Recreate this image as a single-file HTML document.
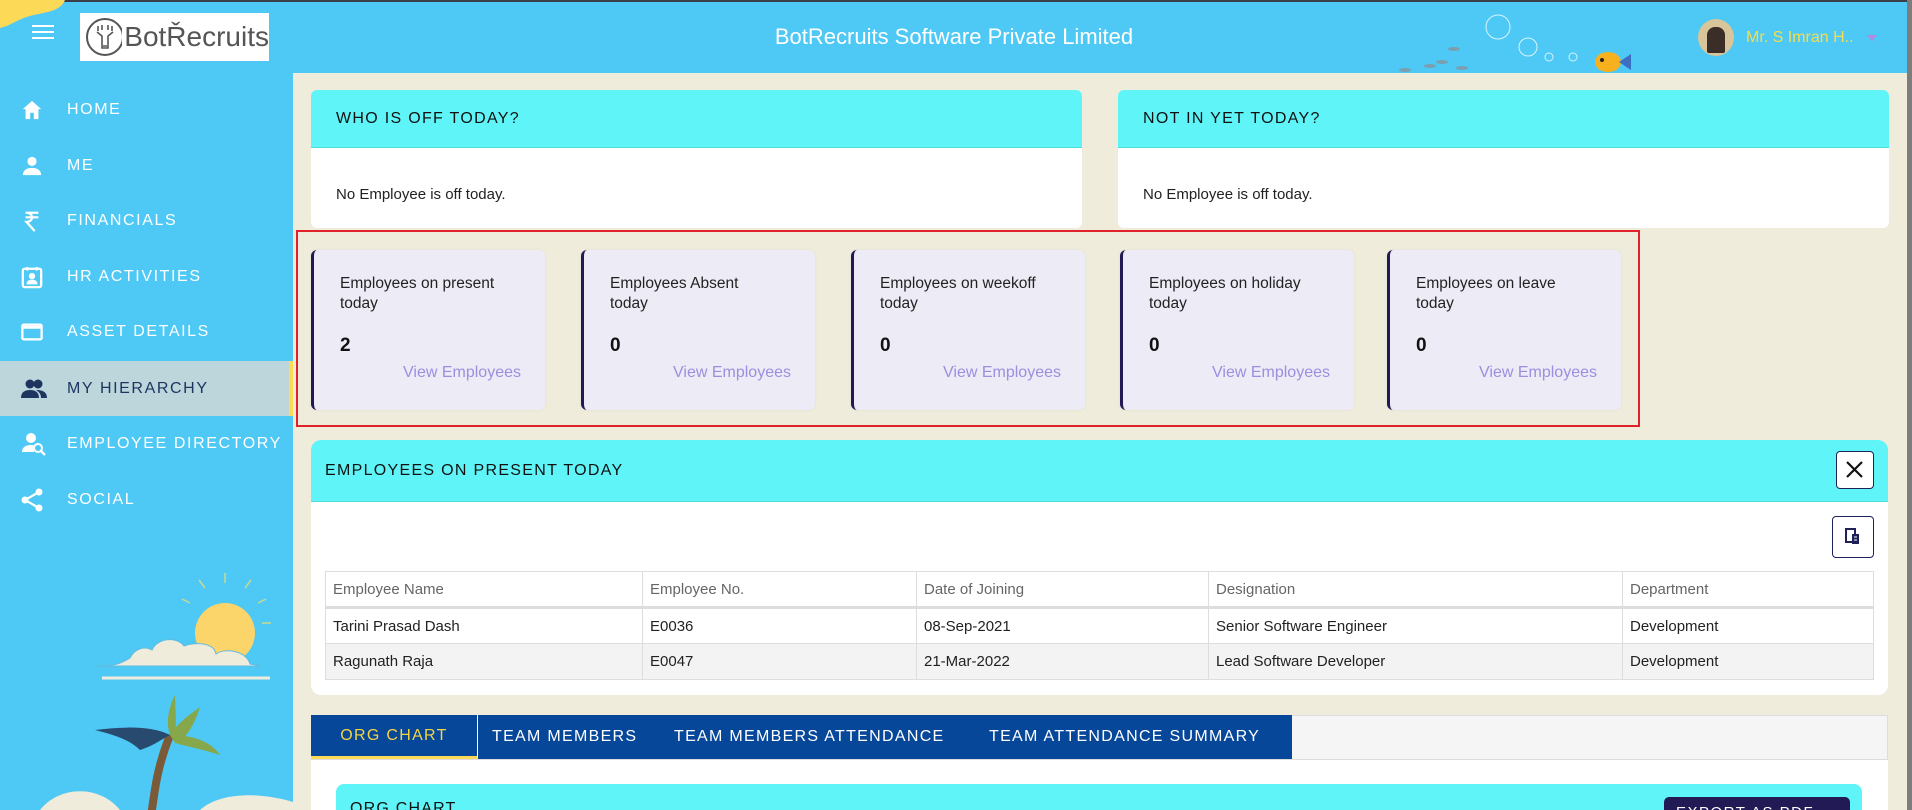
<!DOCTYPE html>
<html><head><meta charset="utf-8"><style>
*{box-sizing:border-box;margin:0;padding:0}
html,body{width:1912px;height:810px;overflow:hidden}
body{background:#efecdc;font-family:"Liberation Sans",sans-serif;position:relative;color:#222}
.abs{position:absolute}
#top{left:0;top:0;width:1908px;height:73px;background:#4ec8f4;border-top:2px solid #3a3f4a}
#side{left:0;top:73px;width:293px;height:737px;background:#4ec8f4;overflow:hidden}
.nav{position:absolute;left:0;width:289px;height:55px;color:#fff;font-size:16px;letter-spacing:1.6px;display:flex;align-items:center}
.nav svg{position:absolute;left:21px}
.nav span{position:absolute;left:67px}
.card{background:#fff;border-radius:6px;overflow:hidden}
.hdr{background:#5ff5f8;border-bottom:1px solid #4fdde0;font-size:16px;letter-spacing:1.3px;color:#111;display:flex;align-items:center;padding-left:25px}
.stat{position:absolute;top:250px;width:234px;height:160px;background:#edebf5;border-left:3px solid #221a55;border-radius:6px;box-shadow:0 0 3px rgba(0,0,0,.06)}
.stat .t{position:absolute;left:26px;top:24px;font-size:15.5px;line-height:20px;color:#222}
.stat .n{position:absolute;left:26px;top:85px;font-size:19px;font-weight:bold;color:#111}
.stat .v{position:absolute;right:24px;top:114px;font-size:16px;color:#9d8ee0}
table{border-collapse:collapse;font-size:15px;color:#222}
td{border:1px solid #ddd;padding:0 7px;height:36px}
.tab{position:absolute;top:715px;height:44px;color:#fff;font-size:16px;letter-spacing:1.3px;display:flex;align-items:center}
</style></head><body>
<div id="top" class="abs">
 <svg class="abs" style="left:0;top:-2px" width="70" height="30"><path d="M0 0H65C60 12 45 12 30 16C18 19 10 26 0 28Z" fill="#fcd957"/></svg>
 <div class="abs" style="left:32px;top:23px;width:22px;height:2px;background:#fff;box-shadow:0 6px 0 #fff,0 12px 0 #fff"></div>
 <div class="abs" style="left:80px;top:11px;width:189px;height:48px;background:#fff;display:flex;align-items:center">
  <svg width="42" height="42" style="margin-left:4px"><circle cx="21" cy="21" r="18" fill="none" stroke="#555" stroke-width="2"/><path d="M14 10v5M18 9v5M24 9v5M28 10v5M13 16l5 4 0 12 h6v-12l5-4M19 30h4" fill="none" stroke="#555" stroke-width="1.6"/></svg>
  <span style="font-size:28px;color:#555;margin-left:2px">BotŘecruits</span></div>
 <div class="abs" style="left:0;width:1908px;top:22px;text-align:center;color:#fff;font-size:22px">BotRecruits Software Private Limited</div>
 <svg class="abs" style="left:1390px;top:10px" width="260" height="60"><g fill="none" stroke="#d6f4ff" stroke-width="1"><circle cx="108" cy="15" r="12"/><circle cx="138" cy="35" r="9"/><circle cx="159" cy="45" r="4"/><circle cx="183" cy="45" r="4"/></g><g fill="#7aa0b0"><ellipse cx="15" cy="58" rx="6" ry="2"/><ellipse cx="40" cy="54" rx="6" ry="2"/><ellipse cx="52" cy="50" rx="6" ry="2"/><ellipse cx="64" cy="37" rx="6" ry="2"/><ellipse cx="72" cy="56" rx="6" ry="2"/><ellipse cx="55" cy="64" rx="6" ry="2"/></g><ellipse cx="218" cy="50" rx="13" ry="10" fill="#f7b11e"/><path d="M229 50l12-8v16z" fill="#3a6fc4"/><circle cx="212" cy="48" r="2" fill="#222"/></svg>
 <div class="abs" style="left:1698px;top:17px;width:36px;height:37px;border-radius:50%;background:#d8c59a;overflow:hidden"><div style="margin:8px 0 0 9px;width:18px;height:26px;background:#3b2e28;border-radius:8px 8px 2px 2px"></div></div>
 <div class="abs" style="left:1746px;top:27px;color:#f7dd4e;font-size:16px">Mr. S Imran H..</div>
 <svg class="abs" style="left:1867px;top:33px" width="10" height="6"><path d="M0 0h10L5 6z" fill="#b28be0"/></svg>
</div>
<div class="abs" style="left:1907px;top:0;width:5px;height:810px;background:#7d7d7d"></div>
<div id="side" class="abs">
 <div class="nav" style="top:9px"><svg width="22" height="22" viewBox="0 0 24 24"><path d="M12 2L2 11h3v11h5v-7h4v7h5V11h3z" fill="#fff"/></svg><span>HOME</span></div>
 <div class="nav" style="top:65px"><svg width="22" height="22" viewBox="0 0 24 24"><circle cx="12" cy="7" r="5" fill="#fff"/><path d="M2 22c0-6 5-8 10-8s10 2 10 8z" fill="#fff"/></svg><span>ME</span></div>
 <div class="nav" style="top:120px"><svg width="22" height="24" viewBox="0 0 24 24"><path d="M5 3h14M5 8h14M6 3c8 0 8 10 0 10l9 10" fill="none" stroke="#fff" stroke-width="2.4"/></svg><span>FINANCIALS</span></div>
 <div class="nav" style="top:176px"><svg width="22" height="24" viewBox="0 0 24 24"><rect x="2" y="3" width="20" height="20" rx="2" fill="none" stroke="#fff" stroke-width="2.5"/><circle cx="12" cy="11" r="3.5" fill="#fff"/><path d="M6 20c0-4 3-5 6-5s6 1 6 5z" fill="#fff"/><path d="M7 1v4M17 1v4" stroke="#fff" stroke-width="2"/></svg><span>HR ACTIVITIES</span></div>
 <div class="nav" style="top:231px"><svg width="22" height="20" viewBox="0 0 24 20"><rect x="1.5" y="2" width="21" height="16" rx="1.5" fill="none" stroke="#fff" stroke-width="2.5"/><path d="M2 5h20" stroke="#fff" stroke-width="3"/></svg><span>ASSET DETAILS</span></div>
 <div class="nav" style="top:288px;background:#bdd6dc;color:#1e3560;border-right:4px solid #fcd957;width:293px"><svg width="27" height="20" viewBox="0 0 27 20"><circle cx="9" cy="5" r="4.5" fill="#1e3560"/><circle cx="17" cy="5" r="4.5" fill="#1e3560"/><path d="M0 19c0-6 4-8 9-8s9 2 9 8zM15 11c5 0 11 1 11 8h-6c0-4-2-6-5-8z" fill="#1e3560"/></svg><span>MY HIERARCHY</span></div>
 <div class="nav" style="top:343px"><svg width="26" height="24" viewBox="0 0 26 24"><circle cx="10" cy="6" r="5" fill="#fff"/><path d="M1 20c0-5 4-7 9-7 1 0 2 0 3 .5v6.5z" fill="#fff"/><circle cx="17" cy="16" r="4" fill="none" stroke="#fff" stroke-width="2"/><path d="M20 19l4 4" stroke="#fff" stroke-width="2.4"/></svg><span>EMPLOYEE DIRECTORY</span></div>
 <div class="nav" style="top:399px"><svg width="22" height="24" viewBox="0 0 22 24"><circle cx="18" cy="4" r="3.5" fill="#fff"/><circle cx="4" cy="12" r="3.5" fill="#fff"/><circle cx="18" cy="20" r="3.5" fill="#fff"/><path d="M18 4L4 12l14 8" fill="none" stroke="#fff" stroke-width="2.2"/></svg><span>SOCIAL</span></div>
 <svg class="abs" style="left:0;top:490px" width="293" height="247">
  <g stroke="#c8d98f" stroke-width="1.5"><path d="M225 20v-10M245 25l6-8M205 25l-6-8M258 40l8-4M262 60h9M190 40l-8-4"/></g>
  <circle cx="225" cy="70" r="30" fill="#fbd46a"/>
  <path d="M95 103c20 0 25-2 35-8 5-10 15-12 22-8 5-12 25-14 32-4 10-4 30-4 32 8 8-6 30-4 34 10l12 2H95z" fill="#efecdc" stroke="#64bbe0"/>
  <path d="M102 115h168" stroke="#efecdc" stroke-width="3"/>
  <path d="M150 262c5-40 8-60 20-90" stroke="#7b5a3a" stroke-width="8" fill="none"/>
  <path d="M170 172c-20-10-50-8-75-5 20 5 35 10 45 20 15-5 20-10 30-15z" fill="#274a6e"/>
  <path d="M170 172c10-15 20-20 30-28-5 15-10 25-20 35zM170 172c20 0 40 5 50 20-15-5-30-8-45-12zM170 172c-5-15 0-30 5-40 0 15 2 25 0 40z" fill="#87a84a"/>
  <path d="M40 247c20-25 60-25 80 0zM200 247c20-18 60-18 93-8v8z" fill="#efecdc"/>
 </svg>
</div>
<!-- top cards -->
<div class="card abs" style="left:311px;top:90px;width:771px;height:138px"><div class="hdr" style="height:58px">WHO IS OFF TODAY?</div><div style="padding:38px 0 0 25px;font-size:15px">No Employee is off today.</div></div>
<div class="card abs" style="left:1118px;top:90px;width:771px;height:138px"><div class="hdr" style="height:58px">NOT IN YET TODAY?</div><div style="padding:38px 0 0 25px;font-size:15px">No Employee is off today.</div></div>
<div class="abs" style="left:296px;top:230px;width:1344px;height:197px;border:2px solid #e0232b"></div>
<div class="stat" style="left:311px"><div class="t">Employees on present<br>today</div><div class="n">2</div><div class="v">View Employees</div></div>
<div class="stat" style="left:581px"><div class="t">Employees Absent<br>today</div><div class="n">0</div><div class="v">View Employees</div></div>
<div class="stat" style="left:851px"><div class="t">Employees on weekoff<br>today</div><div class="n">0</div><div class="v">View Employees</div></div>
<div class="stat" style="left:1120px"><div class="t">Employees on holiday<br>today</div><div class="n">0</div><div class="v">View Employees</div></div>
<div class="stat" style="left:1387px"><div class="t">Employees on leave<br>today</div><div class="n">0</div><div class="v">View Employees</div></div>
<!-- present panel -->
<div class="card abs" style="left:311px;top:440px;width:1577px;height:255px;border-radius:10px">
 <div class="hdr" style="height:62px;padding-left:14px">EMPLOYEES ON PRESENT TODAY</div>
 <div class="abs" style="left:1525px;top:11px;width:38px;height:38px;border:1.5px solid #1e2258;border-radius:4px;background:#fff"><svg width="35" height="35"><path d="M10 10l15 15M25 10L10 25" stroke="#111" stroke-width="2.2"/></svg></div>
 <div class="abs" style="left:1521px;top:76px;width:42px;height:42px;border:1.5px solid #1e2258;border-radius:4px;background:#fff"><svg width="39" height="39"><rect x="13" y="12" width="9" height="13" fill="none" stroke="#1e2258" stroke-width="2"/><rect x="19" y="17" width="7" height="10" fill="#1e2258"/><path d="M21 20h3M21 23h3" stroke="#fff"/></svg></div>
 <table class="abs" style="left:14px;top:131px;width:1549px">
  <tr style="color:#666"><td style="width:317px">Employee Name</td><td style="width:274px">Employee No.</td><td style="width:292px">Date of Joining</td><td style="width:414px">Designation</td><td>Department</td></tr>
  <tr style="border-top:3px solid #ddd"><td>Tarini Prasad Dash</td><td>E0036</td><td>08-Sep-2021</td><td>Senior Software Engineer</td><td>Development</td></tr>
  <tr style="background:#f3f3f3"><td>Ragunath Raja</td><td>E0047</td><td>21-Mar-2022</td><td>Lead Software Developer</td><td>Development</td></tr>
 </table>
</div>
<!-- tabs -->
<div class="abs" style="left:311px;top:715px;width:1577px;height:95px;background:#fff"></div>
<div class="abs" style="left:311px;top:715px;width:1577px;height:45px;background:#f5f5f5;border:1px solid #ddd"></div>
<div class="abs" style="left:311px;top:715px;width:981px;height:44px;background:#07479a"></div>
<div class="tab" style="left:311px;width:167px;justify-content:center;color:#f5d442;border-bottom:3px solid #fcd957;border-right:1px solid #fff">ORG CHART</div>
<div class="tab" style="left:492px">TEAM MEMBERS</div>
<div class="tab" style="left:674px">TEAM MEMBERS ATTENDANCE</div>
<div class="tab" style="left:989px">TEAM ATTENDANCE SUMMARY</div>
<div class="abs" style="left:336px;top:784px;width:1526px;height:26px;background:#5ff5f8;border-radius:8px 8px 0 0;overflow:hidden"></div>
<div class="abs" style="left:350px;top:801px;height:9px;overflow:hidden;font-size:16px;letter-spacing:1.2px;color:#111;line-height:16px">ORG CHART</div>
<div class="abs" style="left:1664px;top:797px;width:186px;height:13px;overflow:hidden;background:#221a55;border-radius:5px 5px 0 0;color:#fff;font-size:15px;letter-spacing:1.5px;padding:8px 0 0 12px;line-height:15px">EXPORT AS PDF</div>
</body></html>
